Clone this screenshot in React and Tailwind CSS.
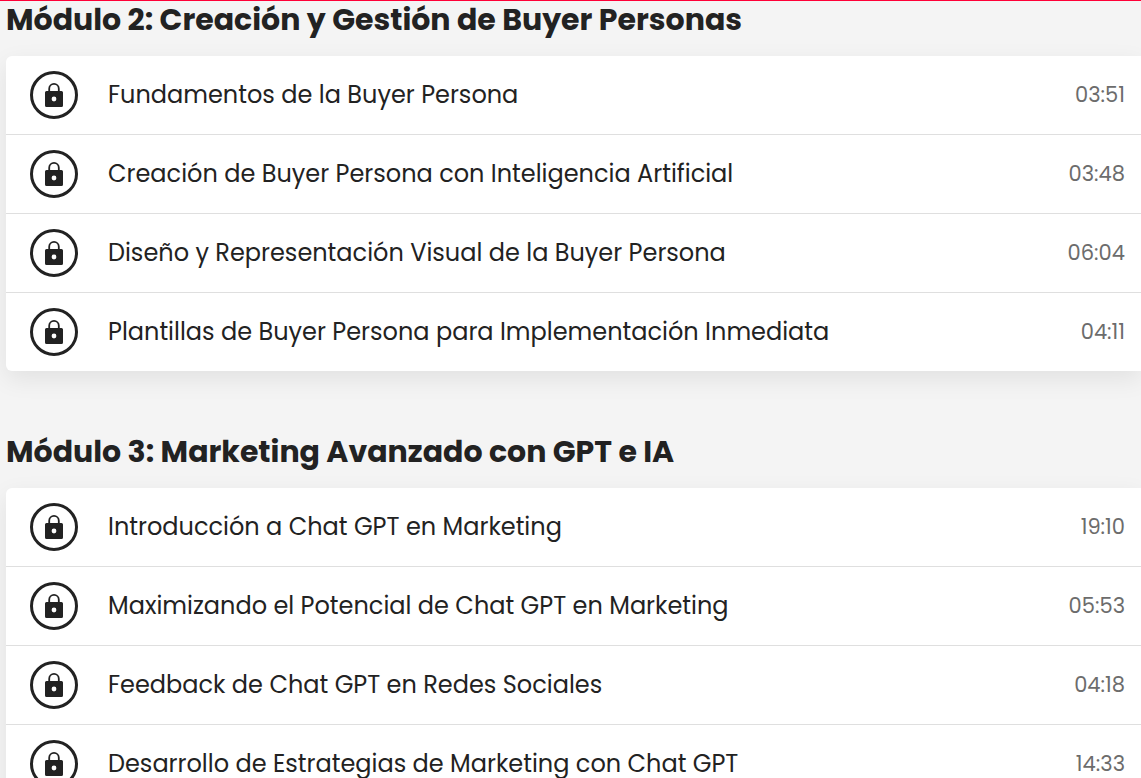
const modules = [
  {
    id: 2,
    title: 'Módulo 2: Creación y Gestión de Buyer Personas',
    lessons: [
      { name: 'Fundamentos de la Buyer Persona', duration: '03:51' },
      { name: 'Creación de Buyer Persona con Inteligencia Artificial', duration: '03:48' },
      { name: 'Diseño y Representación Visual de la Buyer Persona', duration: '06:04' },
      { name: 'Plantillas de Buyer Persona para Implementación Inmediata', duration: '04:11' },
    ],
  },
  {
    id: 3,
    title: 'Módulo 3: Marketing Avanzado con GPT e IA',
    lessons: [
      { name: 'Introducción a Chat GPT en Marketing', duration: '19:10' },
      { name: 'Maximizando el Potencial de Chat GPT en Marketing', duration: '05:53' },
      { name: 'Feedback de Chat GPT en Redes Sociales', duration: '04:18' },
      { name: 'Desarrollo de Estrategias de Marketing con Chat GPT', duration: '14:33' },
    ],
  },
];

function LockBadge() {
  return (
    <span className="flex size-12 shrink-0 items-center justify-center rounded-full border-3 border-[#222222]">
      <svg viewBox="0 0 18 24" className="h-6 w-[18px]" aria-hidden="true">
        <path d="M4.200 9V5.700a4.800 4.800 0 0 1 9.600 0V9" fill="none" stroke="#222222" strokeWidth="1.800" />
        <path
          fill="#222222"
          fillRule="evenodd"
          d="M1.500 8h15A1.500 1.500 0 0 1 18 9.500v13a1.500 1.500 0 0 1-1.500 1.500h-15A1.500 1.500 0 0 1 0 22.500v-13A1.500 1.500 0 0 1 1.500 8zM9 13.600a2.400 2.400 0 1 0 0 4.800 2.400 2.400 0 0 0 0-4.800z"
        />
      </svg>
    </span>
  );
}

function Lesson({ name, duration }) {
  return (
    <li className="flex items-center py-[15px] pr-4 pl-6">
      <LockBadge />
      <span className="ml-[30px] flex-1 text-2xl leading-9 whitespace-nowrap">{name}</span>
      <span className="text-[21px] leading-9 text-[#6c6c6c]">{duration}</span>
    </li>
  );
}

export default function App() {
  return (
    <main className="h-screen overflow-hidden border-t border-[#ff0037] bg-[#f4f4f4] pl-1.5 font-[Poppins,Inter,sans-serif] text-[#222222]">
      <div className="flex flex-col gap-[62px]">
        {modules.map((module) => (
          <section key={module.id}>
            <h2 className="mb-[17px] text-[30px] leading-[38px] font-bold whitespace-nowrap">{module.title}</h2>
            <ul className="divide-y divide-[#dfdfdf] rounded-l-md bg-white shadow-[0_8px_24px_rgba(0,0,0,0.08)]">
              {module.lessons.map((lesson) => (
                <Lesson key={lesson.name} name={lesson.name} duration={lesson.duration} />
              ))}
            </ul>
          </section>
        ))}
      </div>
    </main>
  );
}
